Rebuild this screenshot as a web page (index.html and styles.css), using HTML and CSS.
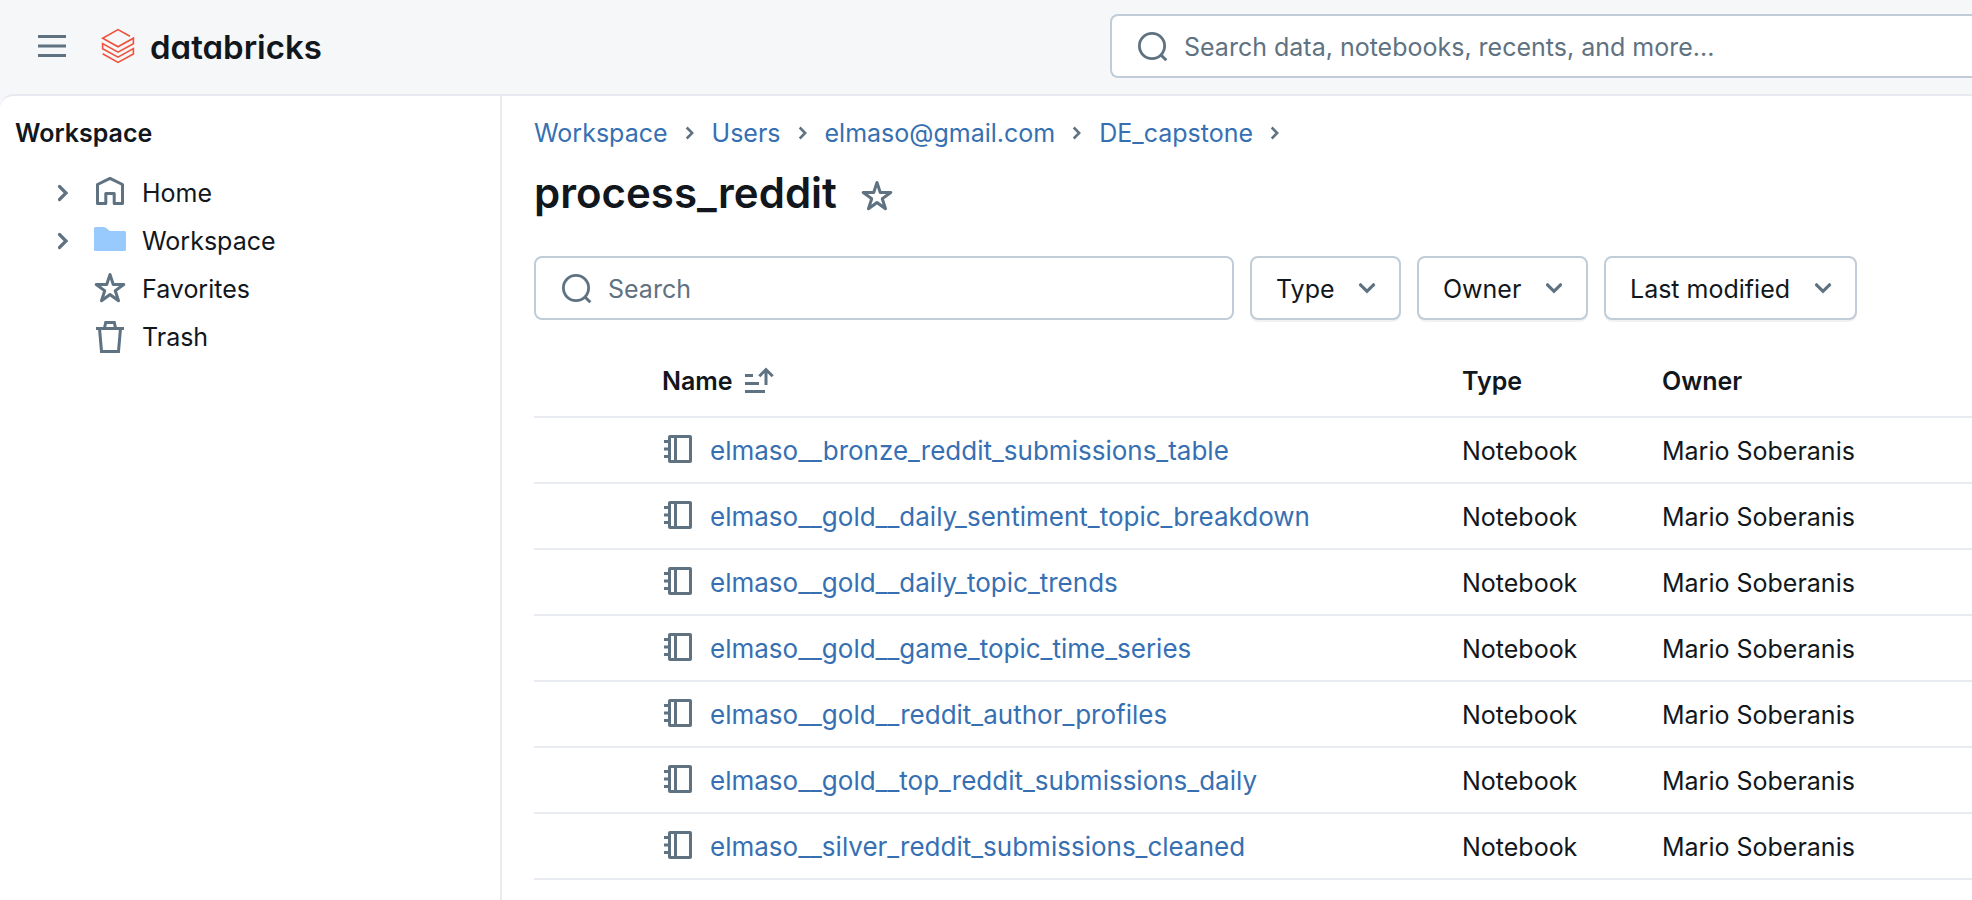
FILE: index.html
```html
<!DOCTYPE html>
<html lang="en">
<head>
<meta charset="utf-8">
<meta name="viewport" content="width=device-width, initial-scale=1">
<title>process_reddit - Databricks</title>
<link rel="stylesheet" href="styles.css">
</head>
<body>
<svg class="sprite" aria-hidden="true">
  <symbol id="i-chevron" viewBox="0 0 32 32"><path d="M12.5 9.5 19 16l-6.500 6.500" fill="none" stroke="currentColor" stroke-width="3.200" stroke-linecap="round"/></symbol>
  <symbol id="i-chevron-thin" viewBox="0 0 32 32"><path d="m12.700 10.500 5.500 5.500-5.500 5.500" fill="none" stroke="currentColor" stroke-width="2.500"/></symbol>
  <symbol id="i-down" viewBox="0 0 32 32"><path d="M9.500 12.800 16 19.300l6.500-6.500" fill="none" stroke="currentColor" stroke-width="3.200" stroke-linecap="round"/></symbol>
  <symbol id="i-search" viewBox="0 0 32 32"><g fill="none" stroke="currentColor" stroke-width="2.800"><circle cx="16" cy="16" r="12.600"/><path d="m24.500 24.500 5.800 5.800" stroke-width="3"/></g></symbol>
  <symbol id="i-star" viewBox="0 -1 16 16"><path fill="currentColor" fill-rule="evenodd" d="M7.995 0a.75.75 0 0 1 .714.518l1.459 4.492h4.723a.75.75 0 0 1 .44 1.356l-3.820 2.776 1.459 4.492a.75.75 0 0 1-1.154.838l-3.820-2.776-3.821 2.776a.75.75 0 0 1-1.154-.838L4.480 9.142.66 6.366A.75.75 0 0 1 1.100 5.010h4.723L7.282.518A.75.75 0 0 1 7.995 0m0 3.177-.914 2.810a.75.75 0 0 1-.713.519h-2.955l2.390 1.737a.75.75 0 0 1 .273.839l-.913 2.810 2.390-1.737a.75.75 0 0 1 .882 0l2.390 1.736-.913-2.810a.75.75 0 0 1 .273-.838l2.390-1.737H9.620a.75.75 0 0 1-.714-.518z"/></symbol>
  <symbol id="i-notebook" viewBox="0 0 32 32"><g fill="none" stroke="currentColor" stroke-width="3"><rect x="7.500" y="3.500" width="21" height="25" rx="0.500"/><path d="M13.500 3v26M2 8.500h5M2 16h5M2 23.500h5"/></g></symbol>
</svg>

<header class="topbar">
  <div class="brand">
    <button class="menu-button" type="button" aria-label="Open navigation">
      <svg class="icon" viewBox="0 0 32 32" aria-hidden="true"><path d="M2 6.500h28M2 16h28M2 25.500h28" stroke="currentColor" stroke-width="3"/></svg>
    </button>
    <a class="logo" href="#" aria-label="databricks">
      <svg class="logo-mark" viewBox="0 0 34 36" aria-hidden="true"><path d="M29 8.200 17 1.600 1.600 10.200 17 18.800l15.400-8.600v5.600L17 24.200 1.600 15.600v5.200L17 29.200l15.400-8.600v5.400L17 34.400 1.600 25.800" fill="none" stroke="#f0503c" stroke-width="1.600"/></svg>
      <span>databricks</span>
    </a>
  </div>
  <label class="field global-search">
    <svg class="icon" aria-hidden="true"><use href="#i-search"/></svg>
    <input type="search" placeholder="Search data, notebooks, recents, and more..." aria-label="Search data, notebooks, recents, and more">
  </label>
</header>

<div class="shell">
  <aside class="sidebar">
    <h2>Workspace</h2>
    <nav aria-label="Workspace">
      <ul class="tree">
        <li><button class="toggle" type="button" aria-label="Expand Home"><svg class="icon" aria-hidden="true"><use href="#i-chevron"/></svg></button><a href="#"><svg class="icon raised" viewBox="0 0 32 32" aria-hidden="true"><path d="M3.500 28.500V9.500L16 3.400l12.500 6.100v19h-8.300V18.500h-8.400v10z" fill="none" stroke="currentColor" stroke-width="3" stroke-linejoin="round"/></svg>Home</a></li>
        <li><button class="toggle" type="button" aria-label="Expand Workspace"><svg class="icon" aria-hidden="true"><use href="#i-chevron"/></svg></button><a href="#"><svg class="icon raised" viewBox="0 0 32 32" aria-hidden="true"><path d="M0 5.500Q0 4 1.500 4H9q2.500 0 4 1.500L15.800 8h14.700Q32 8 32 9.500v17q0 1.500-1.500 1.500h-29Q0 28 0 26.500z" fill="#98cafd"/></svg>Workspace</a></li>
        <li><span class="toggle"></span><a href="#"><svg class="icon raised" aria-hidden="true"><use href="#i-star"/></svg>Favorites</a></li>
        <li><span class="toggle"></span><a href="#"><svg class="icon raised" viewBox="0 0 32 32" aria-hidden="true"><path d="M2 9.500h28M5.500 9.500l2 23h17l2-23M10.500 9l1.200-5.500h8.600L21.500 9" fill="none" stroke="currentColor" stroke-width="3"/></svg>Trash</a></li>
      </ul>
    </nav>
  </aside>

  <main class="content">
    <nav class="breadcrumb" aria-label="Breadcrumb">
      <a href="#">Workspace</a><svg class="icon" aria-hidden="true"><use href="#i-chevron-thin"/></svg>
      <a href="#">Users</a><svg class="icon" aria-hidden="true"><use href="#i-chevron-thin"/></svg>
      <a href="#">elmaso@gmail.com</a><svg class="icon" aria-hidden="true"><use href="#i-chevron-thin"/></svg>
      <a href="#">DE_capstone</a><svg class="icon" aria-hidden="true"><use href="#i-chevron-thin"/></svg>
    </nav>

    <div class="title-row">
      <h1>process_reddit</h1>
      <button class="star-button" type="button" aria-label="Add to favorites"><svg class="icon" aria-hidden="true"><use href="#i-star"/></svg></button>
    </div>

    <div class="filters">
      <label class="field folder-search">
        <svg class="icon" aria-hidden="true"><use href="#i-search"/></svg>
        <input type="search" placeholder="Search" aria-label="Search this folder">
      </label>
      <div class="picker"><select aria-label="Type"><option>Type</option></select><svg class="icon" aria-hidden="true"><use href="#i-down"/></svg></div>
      <div class="picker"><select aria-label="Owner"><option>Owner</option></select><svg class="icon" aria-hidden="true"><use href="#i-down"/></svg></div>
      <div class="picker"><select aria-label="Last modified"><option>Last modified</option></select><svg class="icon" aria-hidden="true"><use href="#i-down"/></svg></div>
    </div>

    <table class="files">
      <colgroup><col class="col-pad"><col class="col-name"><col class="col-type"><col></colgroup>
      <thead>
        <tr>
          <td></td>
          <th scope="col" aria-sort="ascending"><button class="sort" type="button">Name<svg class="icon" viewBox="0 0 32 32" aria-hidden="true"><path d="M1 10.500h8M1 18.500h14M1 26.500h20M22 20V4.500M15.300 11.200 22 4.500l6.700 6.700" fill="none" stroke="currentColor" stroke-width="3"/></svg></button></th>
          <th scope="col">Type</th>
          <th scope="col">Owner</th>
        </tr>
      </thead>
      <tbody>
        <tr><td></td><td><a href="#"><svg class="icon raised" aria-hidden="true"><use href="#i-notebook"/></svg>elmaso__bronze_reddit_submissions_table</a></td><td>Notebook</td><td>Mario Soberanis</td></tr>
        <tr><td></td><td><a href="#"><svg class="icon raised" aria-hidden="true"><use href="#i-notebook"/></svg>elmaso__gold__daily_sentiment_topic_breakdown</a></td><td>Notebook</td><td>Mario Soberanis</td></tr>
        <tr><td></td><td><a href="#"><svg class="icon raised" aria-hidden="true"><use href="#i-notebook"/></svg>elmaso__gold__daily_topic_trends</a></td><td>Notebook</td><td>Mario Soberanis</td></tr>
        <tr><td></td><td><a href="#"><svg class="icon raised" aria-hidden="true"><use href="#i-notebook"/></svg>elmaso__gold__game_topic_time_series</a></td><td>Notebook</td><td>Mario Soberanis</td></tr>
        <tr><td></td><td><a href="#"><svg class="icon raised" aria-hidden="true"><use href="#i-notebook"/></svg>elmaso__gold__reddit_author_profiles</a></td><td>Notebook</td><td>Mario Soberanis</td></tr>
        <tr><td></td><td><a href="#"><svg class="icon raised" aria-hidden="true"><use href="#i-notebook"/></svg>elmaso__gold__top_reddit_submissions_daily</a></td><td>Notebook</td><td>Mario Soberanis</td></tr>
        <tr><td></td><td><a href="#"><svg class="icon raised" aria-hidden="true"><use href="#i-notebook"/></svg>elmaso__silver_reddit_submissions_cleaned</a></td><td>Notebook</td><td>Mario Soberanis</td></tr>
      </tbody>
    </table>
  </main>
</div>
</body>
</html>
```

FILE: styles.css
```css
:root {
  --text: #11171c;
  --muted: #5f7281;
  --link: #3670b2;
  --line: #e8ecf0;
  --divider: #e8eaf1;
  --control: #c0cdd8;
  --bar: #f6f7f9;
}

* { box-sizing: border-box; }

body {
  margin: 0;
  min-height: 100vh;
  display: flex;
  flex-direction: column;
  background: var(--bar);
  color: var(--text);
  font: 400 25px/32px Inter, "Liberation Sans", sans-serif;
}

a { color: inherit; text-decoration: none; }
button, input, select { font: inherit; color: inherit; }
button { padding: 0; border: 0; background: none; cursor: pointer; }
h1, h2 { margin: 0; font-weight: 600; }

.sprite { position: absolute; width: 0; height: 0; }
.icon { display: block; flex: none; width: 32px; height: 32px; color: var(--muted); overflow: visible; }
.raised { margin-bottom: 4px; }

/* Top bar */
.topbar {
  display: grid;
  grid-template-columns: minmax(360px, 1110px) minmax(400px, 1fr);
  align-items: center;
  padding: 14px 0 16px;
}
.brand { display: flex; align-items: center; gap: 33px; padding-left: 36px; }
.logo { display: flex; align-items: center; gap: 15px; font-size: 33px; font-weight: 600; font-feature-settings: "cv11"; }
.logo span { padding-top: 2px; }
.logo-mark { width: 34px; height: 36px; }

.field {
  display: flex;
  align-items: center;
  gap: 16px;
  height: 64px;
  padding: 0 24px;
  border: 2px solid var(--control);
  border-radius: 8px;
  background: #fff;
}
.field input { flex: 1; min-width: 0; padding: 2px 0 0; border: 0; outline: 0; background: none; }
.field input::placeholder { color: var(--muted); opacity: 1; }
.global-search { border-right: 0; border-radius: 8px 0 0 8px; }

/* Page body */
.shell {
  flex: 1;
  display: grid;
  grid-template-columns: 502px minmax(0, 1fr);
  border-top: 2px solid var(--divider);
  border-top-left-radius: 14px;
  background: #fff;
}
.sidebar { border-right: 2px solid var(--line); padding-top: 21px; }
.sidebar h2 { padding-left: 15px; font-size: 25px; line-height: 32px; }
.tree { list-style: none; margin: 20px 0 0; padding: 0 0 0 47px; }
.tree li { display: flex; align-items: center; gap: 15px; height: 48px; }
.tree a { display: flex; align-items: center; gap: 16px; }
.toggle { width: 32px; }

.content { padding: 21px 0 0 32px; }
.breadcrumb { display: flex; align-items: center; gap: 6px; color: var(--link); }

.title-row { display: flex; align-items: center; gap: 24px; margin-top: 20px; }
h1 { font-size: 42px; line-height: 48px; }
.star-button { padding-top: 4px; }

.filters { display: flex; gap: 16px; margin-top: 39px; }
.folder-search { width: 700px; }
.picker { position: relative; }
.picker select {
  appearance: none;
  height: 64px;
  padding: 2px 64px 0 24px;
  border: 2px solid var(--control);
  border-radius: 8px;
  background: #fff;
  box-shadow: 0 2px 0 rgba(0, 0, 0, 0.05);
}
.picker .icon { position: absolute; right: 18px; top: 16px; pointer-events: none; }

.files { width: 100%; margin-top: 26px; border-collapse: separate; border-spacing: 0; table-layout: fixed; }
.col-pad { width: 128px; }
.col-name { width: 800px; }
.col-type { width: 200px; }
.files th, .files td { height: 66px; padding: 2px 0 0; border-bottom: 2px solid var(--line); text-align: left; }
.files th { height: 72px; padding: 0; font-weight: 600; }
.files tbody a { display: flex; align-items: center; gap: 16px; color: var(--link); font-size: 26px; }
.sort { display: flex; align-items: center; gap: 11px; font-weight: 600; }
```
